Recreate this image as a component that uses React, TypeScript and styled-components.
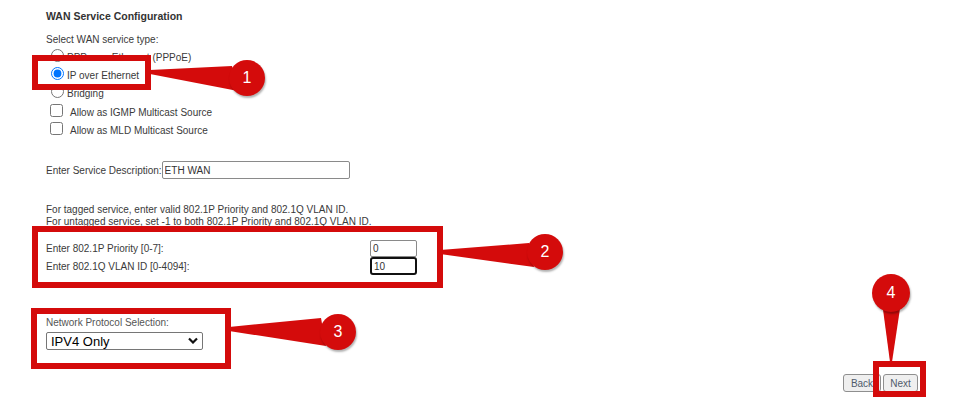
import React from 'react';
import styled, { createGlobalStyle } from 'styled-components';

const RED = '#d40b0b';

const GlobalStyle = createGlobalStyle`
  html, body {
    margin: 0;
    padding: 0;
    background: #ffffff;
  }
  body {
    font-family: "Liberation Sans", Arial, sans-serif;
    font-size: 10px;
    color: #3a3a3a;
  }
`;

const Page = styled.div`
  position: relative;
  width: 964px;
  height: 416px;
  overflow: hidden;
`;

const Form = styled.div`
  display: flex;
  flex-direction: column;
  padding: 10px 0 0 46px;
`;

const Title = styled.div`
  font-size: 10.5px;
  font-weight: bold;
  line-height: 12px;
  color: #333333;
`;

const Label = styled.div<{ $gap?: number; $muted?: boolean }>`
  margin-top: ${(p) => p.$gap ?? 0}px;
  line-height: 12px;
  color: ${(p) => (p.$muted ? '#555555' : '#3a3a3a')};
`;

const OptionList = styled.div`
  display: flex;
  flex-direction: column;
  margin-top: 2px;
`;

const OptionRow = styled.label<{ $gap?: number }>`
  display: flex;
  align-items: center;
  height: 18px;
  margin-top: ${(p) => p.$gap ?? 0}px;
`;

const Radio = styled.input.attrs({ type: 'radio' })`
  width: 13px;
  height: 13px;
  margin: 0 3px 4px 5px;
  accent-color: #0075ff;
`;

const Check = styled.input.attrs({ type: 'checkbox' })`
  width: 13px;
  height: 13px;
  margin: 0 7px 4px 4px;
`;

const FieldRow = styled.div`
  display: flex;
  align-items: center;
  height: 18px;
  margin-top: 22px;
`;

const TextBox = styled.input<{ $w: number; $h?: number; $focused?: boolean }>`
  box-sizing: border-box;
  width: ${(p) => p.$w}px;
  height: ${(p) => p.$h ?? (p.$focused ? 18 : 17)}px;
  margin: 0;
  padding: 0 2px;
  border: ${(p) => (p.$focused ? '2px solid #111111' : '1px solid #8a8a8a')};
  border-radius: ${(p) => (p.$focused ? 3 : 2)}px;
  font-family: "Liberation Sans", Arial, sans-serif;
  font-size: 10px;
  color: #333333;
  outline: none;
  background: #ffffff;
`;

const Notes = styled.div`
  margin-top: 25px;
  line-height: 12px;
`;

const VlanGrid = styled.div`
  display: grid;
  grid-template-columns: 324px 47px;
  grid-auto-rows: 18px;
  align-items: center;
  margin-top: 11px;
`;

const SelectWrap = styled.div`
  position: relative;
  width: 157px;
  margin-top: 3px;
`;

const Select = styled.select`
  box-sizing: border-box;
  width: 157px;
  height: 18px;
  margin: 0;
  padding: 0 0 0 4px;
  appearance: none;
  border: 1px solid #767676;
  border-radius: 2px;
  background: #ffffff;
  font-family: "Liberation Sans", Arial, sans-serif;
  font-size: 13px;
  color: #000000;
`;

const Chevron = styled.svg`
  position: absolute;
  right: 5px;
  top: 5px;
  pointer-events: none;
`;

const ButtonRow = styled.div`
  display: flex;
  justify-content: flex-end;
  gap: 2px;
  margin-top: 24px;
  padding-right: 46px;
`;

const Button = styled.button<{ $w: number }>`
  box-sizing: border-box;
  width: ${(p) => p.$w}px;
  height: 18px;
  padding: 0;
  border: 1px solid #8f8f8f;
  border-radius: 3px;
  background: #efefef;
  font-family: "Liberation Sans", Arial, sans-serif;
  font-size: 10px;
  color: #4f5b6b;
`;

/* annotation layer drawn over the form */
const Overlay = styled.div`
  position: absolute;
  inset: 0;
  pointer-events: none;
`;

const Highlight = styled.div<{ $x: number; $y: number; $w: number; $h: number }>`
  position: absolute;
  left: ${(p) => p.$x}px;
  top: ${(p) => p.$y}px;
  width: ${(p) => p.$w}px;
  height: ${(p) => p.$h}px;
  box-sizing: border-box;
  border: 6px solid ${RED};
`;

const Pointers = styled.svg`
  position: absolute;
  left: 0;
  top: 0;
`;

const Badge = styled.div<{ $x: number; $y: number; $r: number }>`
  position: absolute;
  left: ${(p) => p.$x - p.$r}px;
  top: ${(p) => p.$y - p.$r}px;
  width: ${(p) => p.$r * 2}px;
  height: ${(p) => p.$r * 2}px;
  border-radius: 50%;
  background: ${RED};
  box-shadow: 1px 2px 2px rgba(0, 0, 0, 0.3);
  display: flex;
  align-items: center;
  justify-content: center;
  color: #ffffff;
  font-family: "Liberation Sans", Arial, sans-serif;
  font-size: 16px;
`;

const boxes = [
  { x: 32, y: 55, w: 119, h: 35 },
  { x: 32, y: 226, w: 411, h: 62 },
  { x: 31, y: 308, w: 200, h: 61 },
  { x: 873, y: 361, w: 53, h: 36 },
];

const callouts = [
  { n: 1, x: 247, y: 78, r: 18, tail: '150,70 150,74 238,91 232,66' },
  { n: 2, x: 545, y: 252, r: 18, tail: '440,250 440,254 534,267 529,243' },
  { n: 3, x: 338, y: 332, r: 18, tail: '229,327 229,331 326,346 321,318' },
  { n: 4, x: 891, y: 293, r: 19, tail: '882,302 901,302 892,362 890,362' },
];

export default function App() {
  return (
    <Page>
      <GlobalStyle />
      <Form>
        <Title>WAN Service Configuration</Title>
        <Label $gap={12}>Select WAN service type:</Label>
        <OptionList>
          <OptionRow>
            <Radio name="wantype" />
            PPP over Ethernet (PPPoE)
          </OptionRow>
          <OptionRow>
            <Radio name="wantype" defaultChecked />
            IP over Ethernet
          </OptionRow>
          <OptionRow>
            <Radio name="wantype" />
            Bridging
          </OptionRow>
          <OptionRow $gap={1}>
            <Check />
            Allow as IGMP Multicast Source
          </OptionRow>
          <OptionRow>
            <Check />
            Allow as MLD Multicast Source
          </OptionRow>
        </OptionList>

        <FieldRow>
          Enter Service Description:
          <TextBox $w={188} $h={18} defaultValue="ETH WAN" />
        </FieldRow>

        <Notes>
          For tagged service, enter valid 802.1P Priority and 802.1Q VLAN ID.
          <br />
          For untagged service, set -1 to both 802.1P Priority and 802.1Q VLAN ID.
        </Notes>

        <VlanGrid>
          <span>Enter 802.1P Priority [0-7]:</span>
          <TextBox $w={47} defaultValue="0" />
          <span>Enter 802.1Q VLAN ID [0-4094]:</span>
          <TextBox $w={47} $focused defaultValue="10" />
        </VlanGrid>

        <Label $gap={42} $muted>
          Network Protocol Selection:
        </Label>
        <SelectWrap>
          <Select defaultValue="ipv4">
            <option value="ipv4">IPV4 Only</option>
            <option value="dual">IPV4&amp;IPV6(Dual Stack)</option>
            <option value="ipv6">IPV6 Only</option>
          </Select>
          <Chevron width="10" height="7" viewBox="0 0 10 7">
            <polyline points="1,1.5 5,5.5 9,1.5" fill="none" stroke="#111" strokeWidth="2.2" />
          </Chevron>
        </SelectWrap>

        <ButtonRow>
          <Button $w={38}>Back</Button>
          <Button $w={35}>Next</Button>
        </ButtonRow>
      </Form>

      <Overlay>
        {boxes.map((b, i) => (
          <Highlight key={i} $x={b.x} $y={b.y} $w={b.w} $h={b.h} />
        ))}
        <Pointers width="964" height="416" viewBox="0 0 964 416">
          {callouts.map((c) => (
            <polygon key={c.n} points={c.tail} fill={RED} />
          ))}
        </Pointers>
        {callouts.map((c) => (
          <Badge key={c.n} $x={c.x} $y={c.y} $r={c.r}>
            {c.n}
          </Badge>
        ))}
      </Overlay>
    </Page>
  );
}
